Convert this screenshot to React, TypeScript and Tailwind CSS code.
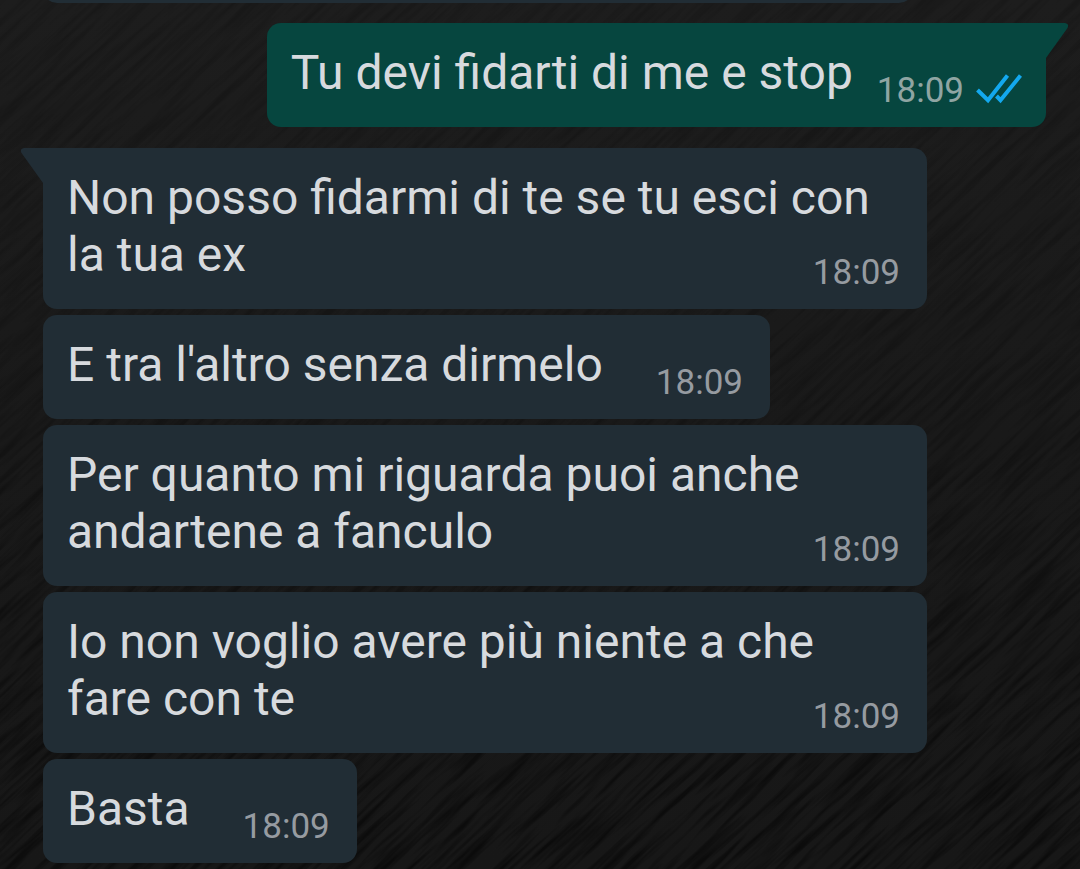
type Message = {
  text: string;
  time: string;
  sent?: boolean;
  tail?: boolean;
};

const messages: Message[] = [
  { text: "Tu devi fidarti di me e stop", time: "18:09", sent: true, tail: true },
  { text: "Non posso fidarmi di te se tu esci con la tua ex", time: "18:09", tail: true },
  { text: "E tra l'altro senza dirmelo", time: "18:09" },
  { text: "Per quanto mi riguarda puoi anche andartene a fanculo", time: "18:09" },
  { text: "Io non voglio avere più niente a che fare con te", time: "18:09" },
  { text: "Basta", time: "18:09" },
];

function Wallpaper() {
  return (
    <svg aria-hidden="true" className="absolute inset-0 -z-10 h-full w-full" viewBox="0 0 1080 869" preserveAspectRatio="xMidYMid slice">
      <defs>
        <filter id="grain" x="0" y="0" width="1" height="1">
          <feTurbulence type="fractalNoise" baseFrequency="0.012 0.16" numOctaves="3" seed="7" />
          <feColorMatrix values="0 0 0 0 0  0 0 0 0 0  0 0 0 0 0  3 0 0 0 -1.3" />
        </filter>
        <linearGradient id="shade" x1="0" y1="0" x2="0" y2="1">
          <stop offset="0" stopColor="#1d1d1d" />
          <stop offset="0.5" stopColor="#191919" />
          <stop offset="1" stopColor="#171717" />
        </linearGradient>
        <linearGradient id="fade" x1="0" y1="0" x2="0" y2="1">
          <stop offset="0" stopColor="#fff" stopOpacity="0.3" />
          <stop offset="0.45" stopColor="#fff" stopOpacity="0.4" />
          <stop offset="1" stopColor="#fff" stopOpacity="1" />
        </linearGradient>
        <mask id="strength">
          <rect width="1080" height="869" fill="url(#fade)" />
        </mask>
      </defs>
      <rect width="1080" height="869" fill="url(#shade)" />
      <g mask="url(#strength)">
        <g transform="rotate(-43 540 434)" opacity="0.5">
          <rect x="-260" y="-366" width="1600" height="1600" filter="url(#grain)" />
        </g>
      </g>
    </svg>
  );
}

function ReadTicks() {
  return (
    <svg role="img" aria-label="Letto" viewBox="0 0 46 30" className="mb-2 h-[30px] w-[46px] shrink-0" fill="none" stroke="#13a8ee" strokeWidth="4">
      <path d="M1.5 16 L12 26.2 L31.5 1.5" />
      <path d="M20.5 22 L24.5 26.2 L44.5 1.5" />
    </svg>
  );
}

function Tail({ sent }: { sent?: boolean }) {
  return sent ? (
    <svg aria-hidden="true" viewBox="0 0 24 36" className="absolute top-0 left-full -ml-px h-9 w-6 fill-[#06463f]">
      <path d="M0 0 H20 Q24.5 1 22.5 5 L1 35 V36 H0 Z" />
    </svg>
  ) : (
    <svg aria-hidden="true" viewBox="0 0 24 36" className="absolute top-0 right-full -mr-px h-9 w-6 fill-[#212d35]">
      <path d="M24 0 H4 Q-0.5 1 1.5 5 L23 35 V36 H24 Z" />
    </svg>
  );
}

function Bubble({ message }: { message: Message }) {
  const { text, time, sent, tail } = message;
  return (
    <li
      className={`relative flow-root max-w-[884px] rounded-[14px] pt-[21px] pl-6 text-[48px] leading-[57px] text-[#d7dade] ${
        sent ? "mb-[15px] self-end bg-[#06463f] pr-6" : "self-start bg-[#212d35] pr-[27px]"
      } ${tail ? (sent ? "rounded-tr-none" : "rounded-tl-none") : ""}`}
    >
      {tail && <Tail sent={sent} />}
      {text}
      <span
        className={`float-right flex items-end gap-3 pt-[26px] pb-[15px] text-[35px] leading-[42px] ${
          sent ? "ml-6 text-[#8fa5a3]" : "ml-[53px] text-[#969ba1]"
        }`}
      >
        <time>{time}</time>
        {sent && <ReadTicks />}
      </span>
    </li>
  );
}

export default function App() {
  return (
    <main className="relative isolate min-h-screen overflow-hidden bg-[#181818] font-[Roboto,sans-serif]">
      <Wallpaper />
      <div aria-hidden="true" className="flex h-[3px] items-end overflow-hidden pl-[43px]">
        <div className="h-10 w-[870px] shrink-0 rounded-[14px] bg-[#212d35]" />
      </div>
      <ul className="flex flex-col gap-[6px] pt-5 pr-[34px] pb-[6px] pl-[43px]">
        {messages.map((message) => (
          <Bubble key={message.text} message={message} />
        ))}
      </ul>
    </main>
  );
}
